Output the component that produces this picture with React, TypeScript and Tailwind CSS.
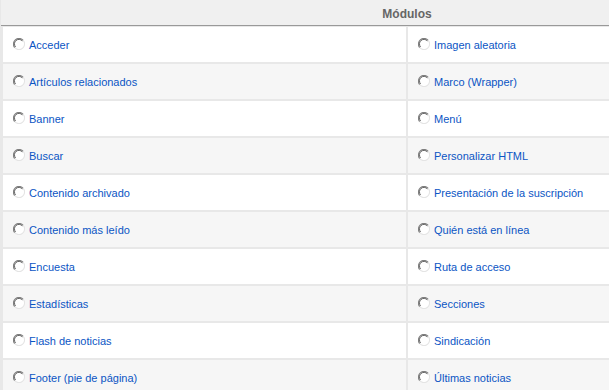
const left = [
  'Acceder',
  'Artículos relacionados',
  'Banner',
  'Buscar',
  'Contenido archivado',
  'Contenido más leído',
  'Encuesta',
  'Estadísticas',
  'Flash de noticias',
  'Footer (pie de página)',
]

const right = [
  'Imagen aleatoria',
  'Marco (Wrapper)',
  'Menú',
  'Personalizar HTML',
  'Presentación de la suscripción',
  'Quién está en línea',
  'Ruta de acceso',
  'Secciones',
  'Sindicación',
  'Últimas noticias',
]

const Radio = () => (
  <svg width="12" height="12" viewBox="0 0 12 12" className="shrink-0" aria-hidden>
    <circle cx="6" cy="6" r="5.5" fill="#fff" />
    <path d="M10.2 2.3 A5.3 5.3 0 0 0 1.8 9.7" fill="none" stroke="#808080" strokeWidth="1.1" />
    <path d="M9.3 2.9 A4.3 4.3 0 0 0 2.6 8.9" fill="none" stroke="#404040" strokeWidth="0.8" />
    <path d="M1.8 9.7 A5.3 5.3 0 0 0 10.2 2.3" fill="none" stroke="#e4e4e4" strokeWidth="1.1" />
  </svg>
)

const Cell = ({ label, odd }: { label: string; odd: boolean }) => (
  <div className={`flex h-[35px] items-start gap-[4px] pl-[10px] pt-[11px] ${odd ? 'bg-[#f6f6f6]' : 'bg-white'}`}>
    <Radio />
    <a className="text-[11px] leading-[14px] text-[#0b55c4]">{label}</a>
  </div>
)

export default function App() {
  return (
    <div className="h-[390px] w-[609px] overflow-hidden bg-white font-['Liberation_Sans',Arial,sans-serif]">
      <div className="w-[813px] bg-[#e8e8e8] pl-[1px]">
        <div className="flex h-[26px] items-center justify-center border-b border-[#999] bg-[#f0f0f0] pt-[2px] text-[12px] font-bold text-[#666]">
          Módulos
        </div>
        <div className="grid grid-cols-[403px_403px] gap-[2px] pl-[2px] pt-[1px]">
          {left.map((l, i) => [
            <Cell key={'l' + i} label={l} odd={i % 2 === 1} />,
            <Cell key={'r' + i} label={right[i]} odd={i % 2 === 1} />,
          ])}
        </div>
      </div>
    </div>
  )
}
